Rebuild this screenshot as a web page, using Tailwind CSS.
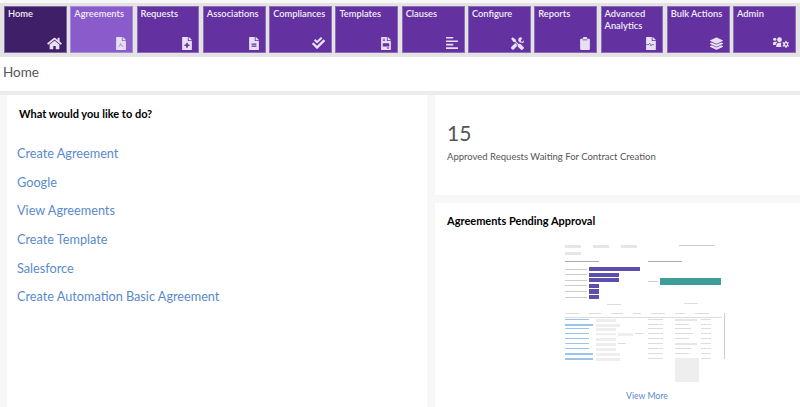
<!DOCTYPE html>
<html lang="en">

<head>
    <meta charset="UTF-8">
    <title>Home</title>
    <script src="https://cdn.jsdelivr.net/npm/@tailwindcss/browser@4"></script>
</head>

<body class="bg-[#f7f7f7] font-['Lato',sans-serif] text-[#333] h-[407px] overflow-hidden">
    <!-- Top nav tiles -->
    <nav class="bg-[#e3e3e3] mt-[3px] h-[54px] px-[4px] pt-[3px] grid grid-cols-12 gap-x-[3.4px]">
        <a class="h-[47px] bg-[#3f1f68] border border-[#7d68a0] px-[3px] pt-[1px] pb-[2px] flex flex-col justify-between text-[#f3eef8] text-[9.3px] leading-[12px] font-semibold">
            <span>Home</span>
            <svg class="w-[15px] h-[13px] self-end mr-[1px]" viewBox="0 0 576 512" fill="#e8dff2"><path d="M280 148 96 300v164a16 16 0 0 0 16 16l112-1a16 16 0 0 0 16-16v-95a16 16 0 0 1 16-16h64a16 16 0 0 1 16 16v95a16 16 0 0 0 16 16l112 1a16 16 0 0 0 16-16V300L296 148a12 12 0 0 0-16 0zM572 251l-84-69V44a12 12 0 0 0-12-12h-56a12 12 0 0 0-12 12v72l-89-74a48 48 0 0 0-61 0L4 251a12 12 0 0 0-2 17l26 31a12 12 0 0 0 17 2L280 107a12 12 0 0 1 16 0l235 194a12 12 0 0 0 17-2l26-31a12 12 0 0 0-2-17z"/></svg>
        </a>
        <a class="h-[47px] bg-[#8a5bca] border border-[#a88bd6] px-[3px] pt-[1px] pb-[2px] flex flex-col justify-between text-[#f3eef8] text-[9.3px] leading-[12px] font-semibold">
            <span>Agreements</span>
            <svg class="w-[10px] h-[13px] self-end mr-[3px]" viewBox="0 0 384 512" fill="#e8dff2"><path d="M224 136V0H24A24 24 0 0 0 0 24v464a24 24 0 0 0 24 24h336a24 24 0 0 0 24-24V160H248a24 24 0 0 1-24-24zM377 105 279 7a24 24 0 0 0-17-7h-6v128h128v-6a24 24 0 0 0-7-17z"/><path d="M90 390c50-20 70-70 80-130 10 50 40 90 120 110" fill="none" stroke="#8a5bca" stroke-width="26"/></svg>
        </a>
        <a class="h-[47px] bg-[#6331a0] border border-[#8c6cb8] px-[3px] pt-[1px] pb-[2px] flex flex-col justify-between text-[#f3eef8] text-[9.3px] leading-[12px] font-semibold">
            <span>Requests</span>
            <svg class="w-[10px] h-[13px] self-end mr-[3px]" viewBox="0 0 384 512" fill="#e8dff2"><path d="M224 136V0H24A24 24 0 0 0 0 24v464a24 24 0 0 0 24 24h336a24 24 0 0 0 24-24V160H248a24 24 0 0 1-24-24zm70 176v32a12 12 0 0 1-12 12h-58v58a12 12 0 0 1-12 12h-40a12 12 0 0 1-12-12v-58h-58a12 12 0 0 1-12-12v-32a12 12 0 0 1 12-12h58v-58a12 12 0 0 1 12-12h40a12 12 0 0 1 12 12v58h58a12 12 0 0 1 12 12zM377 105 279 7a24 24 0 0 0-17-7h-6v128h128v-6a24 24 0 0 0-7-17z"/></svg>
        </a>
        <a class="h-[47px] bg-[#6331a0] border border-[#8c6cb8] px-[3px] pt-[1px] pb-[2px] flex flex-col justify-between text-[#f3eef8] text-[9.3px] leading-[12px] font-semibold">
            <span>Associations</span>
            <svg class="w-[10px] h-[13px] self-end mr-[3px]" viewBox="0 0 384 512" fill="#e8dff2"><path d="M224 136V0H24A24 24 0 0 0 0 24v464a24 24 0 0 0 24 24h336a24 24 0 0 0 24-24V160H248a24 24 0 0 1-24-24zm64 236a12 12 0 0 1-12 12H108a12 12 0 0 1-12-12v-24a12 12 0 0 1 12-12h168a12 12 0 0 1 12 12zm0-80a12 12 0 0 1-12 12H108a12 12 0 0 1-12-12v-24a12 12 0 0 1 12-12h168a12 12 0 0 1 12 12zM377 105 279 7a24 24 0 0 0-17-7h-6v128h128v-6a24 24 0 0 0-7-17z"/></svg>
        </a>
        <a class="h-[47px] bg-[#6331a0] border border-[#8c6cb8] px-[3px] pt-[1px] pb-[2px] flex flex-col justify-between text-[#f3eef8] text-[9.3px] leading-[12px] font-semibold">
            <span>Compliances</span>
            <svg class="w-[13px] h-[13px] self-end mr-[3px]" viewBox="0 0 512 512" fill="#e8dff2"><path d="M505 174 215 464a24 24 0 0 1-34 0L7 290a24 24 0 0 1 0-34l34-34a24 24 0 0 1 34 0l123 123L437 106a24 24 0 0 1 34 0l34 34a24 24 0 0 1 0 34z"/><path d="M186 250 86 150a16 16 0 0 1 0-23l36-36a16 16 0 0 1 23 0l53 53L340 10a16 16 0 0 1 23 0l36 36a16 16 0 0 1 0 23L209 250a16 16 0 0 1-23 0z"/></svg>
        </a>
        <a class="h-[47px] bg-[#6331a0] border border-[#8c6cb8] px-[3px] pt-[1px] pb-[2px] flex flex-col justify-between text-[#f3eef8] text-[9.3px] leading-[12px] font-semibold">
            <span>Templates</span>
            <svg class="w-[10px] h-[13px] self-end mr-[3px]" viewBox="0 0 384 512" fill="#e8dff2"><path d="M224 136V0H24A24 24 0 0 0 0 24v464a24 24 0 0 0 24 24h336a24 24 0 0 0 24-24V160H248a24 24 0 0 1-24-24zM64 72a8 8 0 0 1 8-8h80a8 8 0 0 1 8 8v16a8 8 0 0 1-8 8H72a8 8 0 0 1-8-8zm0 64a8 8 0 0 1 8-8h80a8 8 0 0 1 8 8v16a8 8 0 0 1-8 8H72a8 8 0 0 1-8-8zm256 304a8 8 0 0 1-8 8h-80a8 8 0 0 1-8-8v-16a8 8 0 0 1 8-8h80a8 8 0 0 1 8 8zm0-80a16 16 0 0 1-16 16H80a16 16 0 0 1-16-16v-96a16 16 0 0 1 16-16h224a16 16 0 0 1 16 16zM377 105 279 7a24 24 0 0 0-17-7h-6v128h128v-6a24 24 0 0 0-7-17z"/></svg>
        </a>
        <a class="h-[47px] bg-[#6331a0] border border-[#8c6cb8] px-[3px] pt-[1px] pb-[2px] flex flex-col justify-between text-[#f3eef8] text-[9.3px] leading-[12px] font-semibold">
            <span>Clauses</span>
            <svg class="w-[12px] h-[12px] self-end mr-[3px] mb-[1px]" viewBox="0 0 448 448" fill="#e8dff2"><rect x="0" y="0" width="270" height="60" rx="10"/><rect x="0" y="128" width="448" height="60" rx="10"/><rect x="0" y="256" width="270" height="60" rx="10"/><rect x="0" y="384" width="448" height="60" rx="10"/></svg>
        </a>
        <a class="h-[47px] bg-[#6331a0] border border-[#8c6cb8] px-[3px] pt-[1px] pb-[2px] flex flex-col justify-between text-[#f3eef8] text-[9.3px] leading-[12px] font-semibold">
            <span>Configure</span>
            <svg class="w-[13px] h-[13px] self-end mr-[3px]" viewBox="0 0 512 512" fill="#e8dff2"><path d="M502 402 385 285c-23-23-57-27-85-14L194 165V104L67 9 4 72l95 127h61l106 106c-13 28-9 62 14 85l117 117c15 15 38 15 52 0l53-53c15-14 15-37 0-52z"/><path d="M332 196l29 29c22-10 49-6 68 12l8 8c30-7 52-27 67-53 6-16 9-40 5-64l-58 58-54-9-9-54 58-58C398-4 347 8 316 39c-24 24-34 58-28 90l-4 26z"/><path d="M232 306 165 239 20 384a68 68 0 0 0 96 96l124-124c-9-16-12-33-8-50z"/></svg>
        </a>
        <a class="h-[47px] bg-[#6331a0] border border-[#8c6cb8] px-[3px] pt-[1px] pb-[2px] flex flex-col justify-between text-[#f3eef8] text-[9.3px] leading-[12px] font-semibold">
            <span>Reports</span>
            <svg class="w-[10px] h-[13px] self-end mr-[3px]" viewBox="0 0 384 512" fill="#e8dff2"><path d="M384 112v352a48 48 0 0 1-48 48H48a48 48 0 0 1-48-48V112a48 48 0 0 1 48-48h60V48a48 48 0 0 1 48-48h72a48 48 0 0 1 48 48v16h60a48 48 0 0 1 48 48z"/><rect x="96" y="96" width="192" height="28" rx="8" fill="#6331a0"/></svg>
        </a>
        <a class="h-[47px] bg-[#6331a0] border border-[#8c6cb8] px-[3px] pt-[1px] pb-[2px] flex flex-col justify-between text-[#f3eef8] text-[9.3px] leading-[12px] font-semibold">
            <span>Advanced Analytics</span>
            <svg class="w-[11px] h-[13px] self-end mr-[3px]" viewBox="0 0 420 512" fill="#e8dff2"><path d="M260 136V0H60a24 24 0 0 0-24 24v464a24 24 0 0 0 24 24h336a24 24 0 0 0 24-24V160H284a24 24 0 0 1-24-24zM413 105 315 7a24 24 0 0 0-17-7h-6v128h128v-6a24 24 0 0 0-7-17z"/><path d="M0 300h150l30-60 50 120 30-60h90" fill="none" stroke="#6331a0" stroke-width="24"/></svg>
        </a>
        <a class="h-[47px] bg-[#6331a0] border border-[#8c6cb8] px-[3px] pt-[1px] pb-[2px] flex flex-col justify-between text-[#f3eef8] text-[9.3px] leading-[12px] font-semibold">
            <span>Bulk Actions</span>
            <svg class="w-[13px] h-[13px] self-end mr-[3px]" viewBox="0 0 512 512" fill="#e8dff2"><path d="M12 124 245 18a26 26 0 0 1 22 0l233 106c16 7 16 30 0 37L267 267a26 26 0 0 1-22 0L12 161c-16-7-16-30 0-37z"/><path d="M500 240l-58-26-161 73a60 60 0 0 1-50 0L70 214l-58 26c-16 7-16 30 0 37l233 106a26 26 0 0 0 22 0l233-106c16-7 16-30 0-37z"/><path d="M500 355l-58-26-161 73a60 60 0 0 1-50 0L70 329l-58 26c-16 7-16 30 0 37l233 106a26 26 0 0 0 22 0l233-106c16-7 16-30 0-37z"/></svg>
        </a>
        <a class="h-[47px] bg-[#6331a0] border border-[#8c6cb8] px-[3px] pt-[1px] pb-[2px] flex flex-col justify-between text-[#f3eef8] text-[9.3px] leading-[12px] font-semibold">
            <span>Admin</span>
            <svg class="w-[16px] h-[12px] self-end mr-[3px] mb-[1px]" viewBox="0 40 640 440" fill="#e8dff2"><circle cx="70" cy="110" r="64"/><circle cx="260" cy="130" r="96"/><path d="M0 340v-60c0-40 30-70 70-70h60c20 0 30 6 44 18-40 22-62 60-68 112z"/><path d="M130 420v-50c0-70 50-120 110-120h100c-30 50-30 110 10 170z"/><path d="M500 170h40l12 50 40 20 45-22 0 40-36 36v44l36 36v40l-45-22-40 20-12 50h-40l-12-50-40-20-45 22-28-40 36-36v-44l-36-36 28-40 45 22 40-20z"/><circle cx="520" cy="314" r="42" fill="#6331a0"/></svg>
        </a>
    </nav>

    <!-- Page title -->
    <header class="h-[34px] bg-white flex items-center px-[3px] pb-[3px] text-[13.5px] text-[#555]">Home</header>
    <div class="h-[4px] bg-[#ececec]"></div>

    <main class="flex pl-[7px] gap-[8px] h-[312px]">
        <!-- Quick links -->
        <section class="w-[420px] bg-white pl-[10px]">
            <h2 class="mt-[12px] ml-[2px] text-[11px] leading-[14px] font-bold text-black">What would you like to do?</h2>
            <ul class="mt-[23px] text-[12.7px] leading-[18px] text-[#5a8acb]">
                <li class="mb-[10.7px]">Create Agreement</li>
                <li class="mb-[10.7px]">Google</li>
                <li class="mb-[10.7px]">View Agreements</li>
                <li class="mb-[10.7px]">Create Template</li>
                <li class="mb-[10.7px]">Salesforce</li>
                <li>Create Automation Basic Agreement</li>
            </ul>
        </section>

        <div class="flex-1 flex flex-col gap-[8px]">
            <!-- Count card -->
            <section class="h-[100px] bg-white pl-[12px] pt-[25px]">
                <div class="text-[21px] leading-[26px] text-[#555]">15</div>
                <p class="mt-[5px] text-[9.5px] leading-[12px] text-[#555]">Approved Requests Waiting For Contract Creation</p>
            </section>

            <!-- Report preview, a scaled down picture of a dashboard -->
            <section class="flex-1 bg-white pl-[12px] pt-[11px]">
                <h2 class="text-[11px] leading-[14px] font-bold text-black">Agreements Pending Approval</h2>

                <div class="ml-[118px] mt-[15px] w-[160px] h-[139px] flex flex-col blur-[0.4px]">
                    <div class="h-[15px] flex justify-between">
                        <div class="flex flex-col gap-[4px] pt-[2px]">
                            <div class="flex gap-[12px]"><i class="w-[16px] h-[3px] bg-[#e6e6e6]"></i><i class="w-[16px] h-[3px] bg-[#e6e6e6]"></i><i class="w-[16px] h-[3px] bg-[#e6e6e6]"></i></div>
                            <i class="w-[16px] h-[3px] bg-[#e6e6e6]"></i>
                        </div>
                        <i class="mt-[2px] mr-[10px] w-[36px] h-[1px] bg-[#ccc]"></i>
                    </div>
                    <div class="mt-[3px] flex h-[52px]">
                        <div class="w-[83px] flex flex-col">
                            <i class="w-[34px] h-[1px] bg-[#aaa]"></i>
                            <div class="mt-[5px] flex flex-col gap-[1.3px]">
                                <div class="flex items-center gap-[2px]"><i class="w-[22px] h-[1px] bg-[#ccc]"></i><i class="w-[51px] h-[4.3px] bg-[#5b50ab]"></i></div>
                                <div class="flex items-center gap-[2px]"><i class="w-[22px] h-[1px] bg-[#ccc]"></i><i class="w-[30px] h-[4.3px] bg-[#5b50ab]"></i></div>
                                <div class="flex items-center gap-[2px]"><i class="w-[22px] h-[1px] bg-[#ccc]"></i><i class="w-[30px] h-[4.3px] bg-[#5b50ab]"></i></div>
                                <div class="flex items-center gap-[2px]"><i class="w-[22px] h-[1px] bg-[#ccc]"></i><i class="w-[10px] h-[4.3px] bg-[#5b50ab]"></i></div>
                                <div class="flex items-center gap-[2px]"><i class="w-[22px] h-[1px] bg-[#ccc]"></i><i class="w-[10px] h-[4.3px] bg-[#5b50ab]"></i></div>
                                <div class="flex items-center gap-[2px]"><i class="w-[22px] h-[1px] bg-[#ccc]"></i><i class="w-[10px] h-[4.3px] bg-[#5b50ab]"></i></div>
                            </div>
                            <i class="mt-[5px] ml-[42px] w-[14px] h-[1px] bg-[#ddd]"></i>
                        </div>
                        <div class="flex-1 flex flex-col">
                            <i class="w-[34px] h-[1px] bg-[#aaa]"></i>
                            <div class="mt-[16px] flex items-center gap-[2px]"><i class="w-[10px] h-[1px] bg-[#ccc]"></i><i class="w-[61px] h-[7px] bg-[#3d9d98]"></i></div>
                            <i class="mt-[18px] ml-[36px] w-[14px] h-[1px] bg-[#ddd]"></i>
                        </div>
                    </div>
                    <div class="flex-1 flex gap-[2px] overflow-hidden">
                        <div class="w-[157px] flex flex-col">
                            <div class="h-[5px] border-b border-[#ddd] flex gap-[10px]"><i class="w-[14px] h-[1px] bg-[#ddd]"></i><i class="w-[12px] h-[1px] bg-[#ddd]"></i><i class="w-[12px] h-[1px] bg-[#ddd]"></i><i class="w-[8px] h-[1px] bg-[#ddd]"></i><i class="w-[14px] h-[1px] bg-[#ddd]"></i><i class="w-[10px] h-[1px] bg-[#ddd]"></i><i class="w-[14px] h-[1px] bg-[#ddd]"></i></div>
                            <div class="h-[5.4px] flex items-start pt-[1px]"><i class="w-[24px] h-[1px] bg-[#9cc3ec]"></i><i class="ml-[7px] w-[20px] h-[3px] bg-[#eee]"></i><i class="ml-[32px] w-[15px] h-[1px] bg-[#ddd]"></i><i class="ml-[12px] w-[22px] h-[2px] bg-[#e6e6e6]"></i><i class="ml-[4px] w-[10px] h-[1px] bg-[#ddd]"></i></div>
                            <div class="h-[5.4px] flex items-start pt-[1px]"><i class="w-[28px] h-[2px] bg-[#9cc3ec]"></i><i class="ml-[3px] w-[24px] h-[3px] bg-[#eee]"></i><i class="ml-[28px] w-[15px] h-[1px] bg-[#ddd]"></i><i class="ml-[12px] w-[14px] h-[1px] bg-[#ddd]"></i><i class="ml-[12px] w-[10px] h-[1px] bg-[#ddd]"></i></div>
                            <div class="h-[5.4px] flex items-start pt-[1px]"><i class="w-[24px] h-[1px] bg-[#9cc3ec]"></i><i class="ml-[7px] w-[20px] h-[3px] bg-[#eee]"></i><i class="ml-[32px] w-[15px] h-[1px] bg-[#ddd]"></i><i class="ml-[12px] w-[16px] h-[1px] bg-[#ddd]"></i><i class="ml-[10px] w-[10px] h-[1px] bg-[#ddd]"></i></div>
                            <div class="h-[5.4px] flex items-start pt-[1px]"><i class="w-[24px] h-[1px] bg-[#9cc3ec]"></i><i class="ml-[7px] w-[20px] h-[2px] bg-[#eee]"></i><i class="ml-[2px] w-[15px] h-[3px] bg-[#eee]"></i><i class="ml-[2px] w-[8px] h-[1px] bg-[#ddd]"></i><i class="ml-[5px] w-[15px] h-[1px] bg-[#ddd]"></i><i class="ml-[12px] w-[18px] h-[1px] bg-[#ddd]"></i><i class="ml-[8px] w-[10px] h-[1px] bg-[#ddd]"></i></div>
                            <div class="h-[5.4px] flex items-start pt-[1px]"><i class="w-[24px] h-[1px] bg-[#9cc3ec]"></i><i class="ml-[7px] w-[20px] h-[3px] bg-[#eee]"></i><i class="ml-[32px] w-[15px] h-[1px] bg-[#ddd]"></i><i class="ml-[12px] w-[14px] h-[1px] bg-[#ddd]"></i><i class="ml-[12px] w-[10px] h-[1px] bg-[#ddd]"></i></div>
                            <div class="h-[5.4px] flex items-start pt-[1px]"><i class="w-[24px] h-[1px] bg-[#9cc3ec]"></i><i class="ml-[7px] w-[20px] h-[3px] bg-[#eee]"></i><i class="ml-[2px] w-[8px] h-[1px] bg-[#ddd]"></i><i class="ml-[22px] w-[15px] h-[1px] bg-[#ddd]"></i><i class="ml-[12px] w-[22px] h-[2px] bg-[#e6e6e6]"></i><i class="ml-[4px] w-[10px] h-[1px] bg-[#ddd]"></i></div>
                            <div class="h-[5.4px] flex items-start pt-[1px]"><i class="w-[24px] h-[1px] bg-[#9cc3ec]"></i><i class="ml-[7px] w-[20px] h-[3px] bg-[#eee]"></i><i class="ml-[32px] w-[15px] h-[1px] bg-[#ddd]"></i><i class="ml-[12px] w-[16px] h-[1px] bg-[#ddd]"></i><i class="ml-[10px] w-[10px] h-[1px] bg-[#ddd]"></i></div>
                            <div class="h-[5.4px] flex items-start pt-[1px]"><i class="w-[28px] h-[2px] bg-[#9cc3ec]"></i><i class="ml-[3px] w-[24px] h-[3px] bg-[#eee]"></i><i class="ml-[28px] w-[15px] h-[1px] bg-[#ddd]"></i><i class="ml-[12px] w-[14px] h-[1px] bg-[#ddd]"></i><i class="ml-[12px] w-[10px] h-[1px] bg-[#ddd]"></i></div>
                            <div class="flex-1 flex items-start pt-[1px]"><i class="w-[28px] h-[2px] bg-[#9cc3ec]"></i><i class="ml-[3px] w-[24px] h-[3px] bg-[#eee]"></i><i class="ml-[28px] w-[15px] h-[1px] bg-[#ddd]"></i><i class="ml-[12px] w-[24px] h-[24px] bg-[#eee]"></i><i class="ml-[2px] w-[10px] h-[1px] bg-[#ddd]"></i></div>
                        </div>
                        <i class="w-[1px] h-[46px] bg-[#ccc]"></i>
                    </div>
                </div>

                <div class="ml-[179px] mt-[8px] text-[8.7px] leading-[12px] text-[#5a8acb]">View More</div>
            </section>
        </div>
    </main>
</body>

</html>
